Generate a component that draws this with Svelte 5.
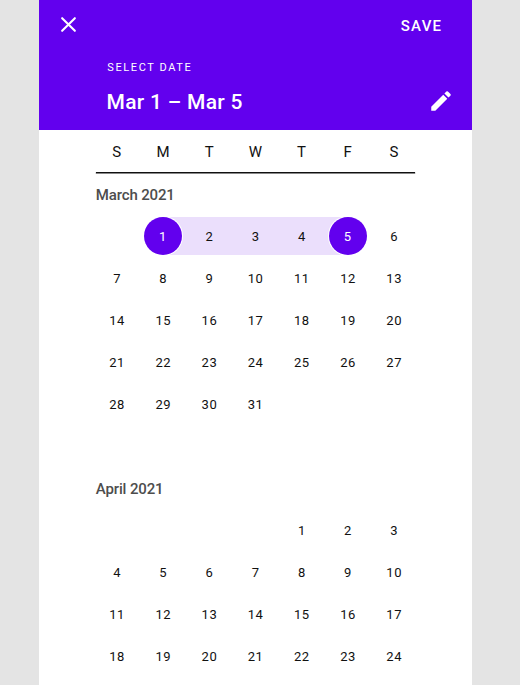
<script>
  const weekdays = ['S', 'M', 'T', 'W', 'T', 'F', 'S'];
  const months = [
    { name: 'March 2021', offset: 1, days: 31, start: 1, end: 5 },
    { name: 'April 2021', offset: 4, days: 24, start: 0, end: 0 }
  ];

  function cells(m) {
    const blanks = Array.from({ length: m.offset }, () => null);
    const days = Array.from({ length: m.days }, (_, i) => i + 1);
    return [...blanks, ...days];
  }
</script>

<main class="screen">
  <section class="dialog">
    <header>
      <div class="bar">
        <button class="icon close" aria-label="Close">
          <svg viewBox="0 0 24 24" width="25" height="25">
            <path d="M5.9 5.9 18.1 18.1M18.1 5.9 5.9 18.1" fill="none" stroke="#fff" stroke-width="2" stroke-linecap="round" />
          </svg>
        </button>
        <button class="save">SAVE</button>
      </div>
      <div class="overline">SELECT DATE</div>
      <div class="range">
        <h1>Mar 1 – Mar 5</h1>
        <button class="icon" aria-label="Edit">
          <svg viewBox="0 0 24 24" width="26" height="26">
            <path fill="#fff" d="M3 17.25V21h3.75L17.81 9.94l-3.75-3.75L3 17.25zM20.71 7.04a1 1 0 0 0 0-1.41l-2.34-2.34a1 1 0 0 0-1.41 0l-1.83 1.83 3.75 3.75 1.83-1.83z" />
          </svg>
        </button>
      </div>
    </header>

    <div class="weekdays">
      {#each weekdays as d}<span>{d}</span>{/each}
    </div>
    <div class="rule"></div>

    {#each months as m}
      <section class="month">
        <h2>{m.name}</h2>
        <div class="grid">
          {#each cells(m) as day}
            <div
              class="cell"
              class:start={day && day === m.start}
              class:end={day && day === m.end}
              class:between={day && day > m.start && day < m.end}
            >
              {#if day}<span>{day}</span>{/if}
            </div>
          {/each}
        </div>
      </section>
    {/each}
  </section>
</main>

<style>
  .screen {
    height: 685px;
    overflow: hidden;
    background: #e4e4e4;
    font-family: Roboto, 'Liberation Sans', sans-serif;
    color: #111;
    display: flex;
    padding-left: 39.3px;
    box-sizing: border-box;
  }
  .dialog {
    width: 432.4px;
    height: 685px;
    overflow: hidden;
    background: #fff;
  }
  header {
    height: 129.7px;
    background: #6200ee;
    color: #fff;
    box-sizing: border-box;
    padding: 10px 17.5px 0 17px;
  }
  button {
    border: 0;
    padding: 0;
    margin: 0;
    background: none;
    color: inherit;
    font: inherit;
  }
  .icon, .icon svg { display: block; }
  .bar {
    display: flex;
    justify-content: space-between;
    align-items: center;
    height: 30px;
  }
  .save {
    font-size: 15px;
    font-weight: 500;
    letter-spacing: 1.2px;
    line-height: 20px;
    margin-right: 12px;
    padding-top: 1px;
  }
  .overline {
    font-size: 11px;
    letter-spacing: 1.6px;
    line-height: 16px;
    margin: 20px 0 0 51px;
  }
  .range {
    display: flex;
    justify-content: space-between;
    align-items: center;
    height: 30px;
    margin-top: 10px;
    padding-left: 50.2px;
  }
  h1 {
    margin: 0;
    font-size: 21px;
    font-weight: 500;
    letter-spacing: 0.3px;
    line-height: 30px;
    padding-top: 2px;
  }
  .close svg { margin-top: -1px; }
  .weekdays, .grid {
    display: grid;
    grid-template-columns: repeat(7, 46.2px);
    margin-left: 54.4px;
  }
  .weekdays {
    height: 42px;
    align-items: center;
    text-align: center;
    font-size: 15px;
    line-height: 44px;
  }
  .rule {
    height: 1.5px;
    background: linear-gradient(#111, #111);
    box-shadow: 0 0.5px 0 0.2px #555;
    width: 319px;
    margin-left: 56.7px;
  }
  .month { height: 294px; }
  h2 {
    margin: 0 0 0 56.5px;
    font-size: 15px;
    font-weight: 500;
    letter-spacing: -0.14px;
    color: #4d4d4d;
    line-height: 45px;
    height: 42px;
  }
  .grid { grid-auto-rows: 42px; }
  .cell {
    position: relative;
    display: flex;
    align-items: center;
    justify-content: center;
    font-size: 13px;
    letter-spacing: 0.5px;
  }
  .cell span {
    position: relative;
    padding: 1px 0 0 0.5px;
  }
  .between::before, .start::before, .end::before {
    content: '';
    position: absolute;
    top: 2px;
    height: 38px;
    left: 0;
    right: 0;
    background: #ebdffc;
  }
  .start::before { left: 50%; }
  .end::before { right: 50%; }
  .start span, .end span {
    width: 38px;
    height: 38px;
    line-height: 39px;
    padding: 0;
    border-radius: 50%;
    background: #6200ee;
    box-shadow: 0 0 0 1px #fff;
    color: #fff;
    text-align: center;
  }
</style>
